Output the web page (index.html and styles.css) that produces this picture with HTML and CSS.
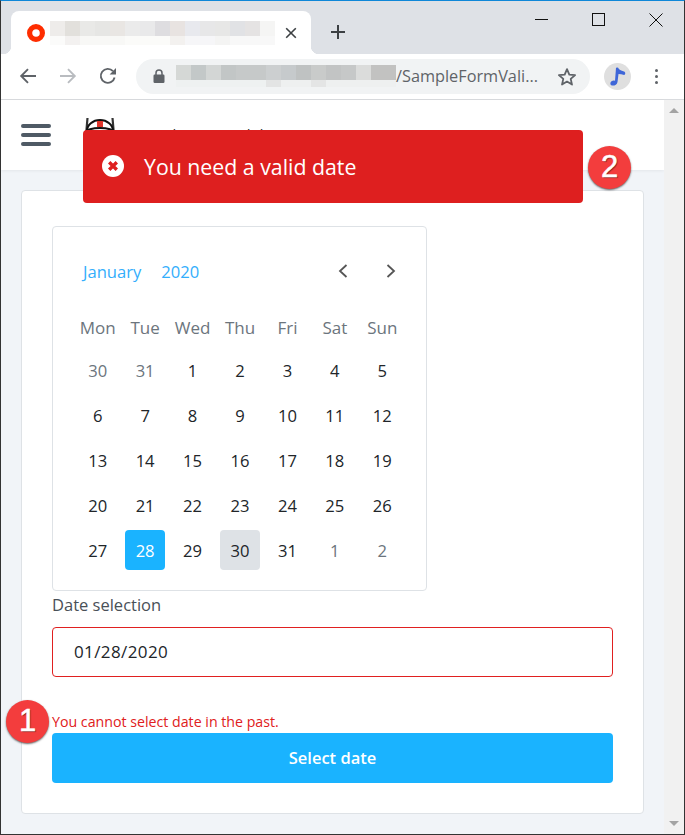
FILE: index.html
```html
<!DOCTYPE html>
<html>
<head>
    <title>Sample Form Validator</title>
    <link rel="stylesheet" href="styles.css">
</head>
<body>
    <div class="window">
        <div class="tabstrip">
            <div class="tab">
                <svg class="favicon" width="18" height="18" viewBox="0 0 18 18"><circle cx="9" cy="9" r="6.4" fill="none" stroke="#fe2d00" stroke-width="5.2"/></svg>
                <div class="tab-blur"><div class="tab-blur-a"></div><div class="tab-blur-b"></div></div>
                <svg class="tab-close" width="12" height="12" viewBox="0 0 12 12"><path d="M1.2 1.2l9.6 9.6M10.8 1.2l-9.6 9.6" stroke="#3c4043" stroke-width="1.6"/></svg>
            </div>
            <svg class="new-tab" width="16" height="16" viewBox="0 0 16 16"><path d="M8 1v14M1 8h14" stroke="#3c4043" stroke-width="2"/></svg>
            <div class="win-controls">
                <svg width="14" height="14" viewBox="0 0 14 14"><path d="M0 6.5h13" stroke="#111" stroke-width="1"/></svg>
                <svg width="14" height="14" viewBox="0 0 14 14"><rect x="0.5" y="0.5" width="12" height="12" fill="none" stroke="#111"/></svg>
                <svg width="14" height="14" viewBox="0 0 14 14"><path d="M0.5 0.5l13 13M13.5 0.5l-13 13" stroke="#111" stroke-width="1"/></svg>
            </div>
        </div>

        <div class="toolbar">
            <svg class="tool-back" width="18" height="18" viewBox="0 0 18 18"><path d="M17 9H2.5M9 2.2L2.2 9 9 15.8" fill="none" stroke="#5f6368" stroke-width="1.9"/></svg>
            <svg class="tool-forward" width="18" height="18" viewBox="0 0 18 18"><path d="M1 9h14.5M9 2.2L15.8 9 9 15.8" fill="none" stroke="#b9bcc0" stroke-width="1.9"/></svg>
            <svg class="tool-reload" width="18" height="18" viewBox="0 0 18 18"><path d="M15.6 10.5A7 7 0 1 1 14 4.2" fill="none" stroke="#5f6368" stroke-width="1.9"/><path d="M17 1v6.4h-6.4z" fill="#5f6368"/></svg>
            <div class="omnibox">
                <svg width="12" height="14" viewBox="0 0 12 14"><path d="M3 6V4a3 3 0 0 1 6 0v2" fill="none" stroke="#5f6368" stroke-width="1.5"/><rect x="0.5" y="5.5" width="11" height="8.5" rx="1.2" fill="#5f6368"/></svg>
                <div class="url-blur"><div class="url-blur-a"></div><div class="url-blur-b"></div></div>
                <span class="url-text">/SampleFormVali...</span>
                <svg class="star" width="20" height="19" viewBox="0 0 20 19"><path d="M10 2.2l2.3 5.4 5.8.5-4.4 3.8 1.3 5.7-5-3-5 3 1.3-5.7L1.9 8.1l5.8-.5z" fill="none" stroke="#5f6368" stroke-width="1.8" stroke-linejoin="round"/></svg>
            </div>
            <div class="avatar">
                <svg width="16" height="19" viewBox="0 0 16 19"><path d="M6 .8L8 .5c.9 2.2 2.9 3.3 6 3.9 1.6.5 1.7 3.1.1 3.7-1.9-.8-3.8-1.1-5.6-1.1L7.5 15c-.5 3-3.5 4-5.5 3.5C0 18-.2 15.5 1.5 14.3 3 13.3 4.5 13.5 5 14z" fill="#3e66d8"/></svg>
            </div>
            <div class="dots"><i></i><i></i><i></i></div>
        </div>

        <div class="viewport">
            <div class="page">
                <div class="navbar">
                    <div class="hamburger"><i></i><i></i><i></i></div>
                    <svg class="logo" width="34" height="36" viewBox="0 0 34 36"><path d="M1.5 24L3.5 1M30.500 24L28.500 1" stroke="#333" stroke-width="2.2" fill="none"/><path d="M3 14a13 11 0 0 1 26 0" fill="#fff" stroke="#111" stroke-width="2"/><rect x="13" y="4" width="6" height="6" fill="#e0362c"/><path d="M2 15a14 4 0 0 1 28 0" fill="none" stroke="#111" stroke-width="2"/></svg>
                    <span class="brand">Sample Form Validator</span>
                </div>
                <div class="content">
                    <div class="card">
                        <div class="calendar">
                            <div class="cal-head">
                                <span class="cal-month">January</span>
                                <span class="cal-year">2020</span>
                                <svg class="cal-prev" width="10" height="16" viewBox="0 0 10 16"><path d="M8.5 2L2 8l6.5 6" fill="none" stroke="#555" stroke-width="1.8"/></svg>
                                <svg class="cal-next" width="10" height="16" viewBox="0 0 10 16"><path d="M1.5 2L8 8l-6.5 6" fill="none" stroke="#555" stroke-width="1.8"/></svg>
                            </div>
                            <div class="cal-grid">
                                <span class="wd">Mon</span><span class="wd">Tue</span><span class="wd">Wed</span><span class="wd">Thu</span><span class="wd">Fri</span><span class="wd">Sat</span><span class="wd">Sun</span>
                                <span class="day muted">30</span><span class="day muted">31</span><span class="day">1</span><span class="day">2</span><span class="day">3</span><span class="day">4</span><span class="day">5</span>
                                <span class="day">6</span><span class="day">7</span><span class="day">8</span><span class="day">9</span><span class="day">10</span><span class="day">11</span><span class="day">12</span>
                                <span class="day">13</span><span class="day">14</span><span class="day">15</span><span class="day">16</span><span class="day">17</span><span class="day">18</span><span class="day">19</span>
                                <span class="day">20</span><span class="day">21</span><span class="day">22</span><span class="day">23</span><span class="day">24</span><span class="day">25</span><span class="day">26</span>
                                <span class="day">27</span><span class="day selected">28</span><span class="day">29</span><span class="day today">30</span><span class="day">31</span><span class="day muted">1</span><span class="day muted">2</span>
                            </div>
                        </div>
                        <label class="field-label">Date selection</label>
                        <div class="field-input">01/28/2020</div>
                        <div class="field-error">You cannot select date in the past.</div>
                        <button class="submit">Select date</button>
                    </div>
                </div>
            </div>
            <div class="scrollbar">
                <i class="arrow-up"></i>
                <i class="arrow-down"></i>
            </div>
        </div>

        <div class="toast">
            <svg width="22" height="22" viewBox="0 0 22 22"><circle cx="11" cy="11" r="11" fill="#fff"/><path d="M7.2 7.2l7.6 7.6M14.8 7.2l-7.6 7.6" stroke="#de1f1f" stroke-width="3.4"/></svg>
            <span class="toast-text">You need a valid date</span>
        </div>
        <div class="badge badge-one">1</div>
        <div class="badge badge-two">2</div>
    </div>
</body>
</html>
```

FILE: styles.css
```css
* {
    box-sizing: border-box;
}

body {
    margin: 0;
    font-family: "Open Sans", "Noto Sans", sans-serif;
    background-color: #fff;
}

.window {
    position: relative;
    width: 685px;
    height: 835px;
    display: flex;
    flex-direction: column;
    overflow: hidden;
    border-top: 1px solid #0f87d8;
    border-left: 1px solid #333;
    border-right: 1px solid #333;
    border-bottom: 1px solid #333;
}

/* browser chrome */
.tabstrip {
    height: 53px;
    flex: none;
    display: flex;
    align-items: flex-end;
    padding-left: 10px;
    background-color: #dee1e6;
}

.tab {
    position: relative;
    width: 300px;
    height: 43px;
    display: flex;
    align-items: center;
    padding: 0 13px 0 16px;
    background-color: #fff;
    border-radius: 8px 8px 0 0;
}

.tab::before,
.tab::after {
    content: "";
    position: absolute;
    bottom: 0;
    width: 8px;
    height: 8px;
}

.tab::before {
    left: -8px;
    background: radial-gradient(circle at 0 0, transparent 8px, #fff 8.5px);
}

.tab::after {
    right: -8px;
    background: radial-gradient(circle at 100% 0, transparent 8px, #fff 8.5px);
}

.favicon {
    flex: none;
}

.tab-blur {
    width: 225px;
    margin: 0 10px 0 5px;
}

.tab-blur-a {
    height: 15px;
    background: linear-gradient(90deg,
        #eeecea 0 15px, #e2e0dc 15px 30px, #e9e9e7 30px 45px, #e6e6e4 45px 60px, #e9e6e3 60px 75px,
        #ebebeb 75px 90px, #e9e9ea 90px 105px, #dedde0 105px 120px, #e8e3e1 120px 135px, #e8e9ee 135px 150px,
        #e7e7e8 150px 165px, #e7e7e6 165px 180px, #e1e2e5 180px 195px, #e5e3e3 195px 210px, #f5f5f4 210px 225px);
}

.tab-blur-b {
    height: 9px;
    background: linear-gradient(90deg,
        #fbfbfa 0 15px, #f3f1f0 15px 30px, #f8f8f6 30px 75px, #fbfbf9 75px 120px, #f3f1ef 120px 135px,
        #f6f6f8 135px 165px, #f4f4f3 165px 180px, #f8f8f8 180px 225px);
}

.tab-close {
    flex: none;
}

.new-tab {
    margin: 0 0 14px 19px;
}

.win-controls {
    margin-left: auto;
    align-self: flex-start;
    display: flex;
    gap: 43px;
    padding: 12px 21px 0 0;
}

.toolbar {
    height: 46px;
    flex: none;
    display: flex;
    align-items: center;
    padding: 0 0 1px 18px;
    background-color: #fff;
    border-bottom: 1px solid #d9dbde;
}

.tool-back,
.tool-forward,
.tool-reload {
    flex: none;
    margin-right: 22px;
}

.tool-reload {
    margin-right: 19px;
}

.omnibox {
    width: 454px;
    height: 35px;
    display: flex;
    align-items: center;
    padding-left: 17px;
    border-radius: 18px;
    background-color: #f1f3f4;
}

.url-blur {
    width: 220px;
    margin-left: 11px;
}

.url-blur-a {
    height: 15px;
    background: linear-gradient(90deg,
        #d5d8d6 0 15px, #c3c8c8 15px 30px, #d3d6d5 30px 45px, #c2c6c6 45px 60px, #c6c9c9 60px 90px,
        #cccfd0 90px 105px, #c6cacc 105px 120px, #bfc2c2 120px 135px, #c9cbca 135px 150px, #c2c4c4 150px 165px,
        #c6c8c8 165px 180px, #dbdcdb 180px 195px, #c2c2c1 195px 220px);
}

.url-blur-b {
    height: 7px;
    background: linear-gradient(90deg,
        #eef1f1 0 90px, #e3e4e4 90px 105px, #eef0f0 105px 135px, #e4e5e5 135px 150px, #eef0f0 150px 220px);
}

.url-text {
    width: 160px;
    font-size: 16.3px;
    color: #5f6368;
    white-space: nowrap;
}

.star {
    flex: none;
    margin-left: 1px;
}

.avatar {
    flex: none;
    width: 27px;
    height: 27px;
    margin-left: 14px;
    display: flex;
    align-items: center;
    justify-content: center;
    border-radius: 50%;
    background-color: #dfdfdf;
}

.dots {
    margin-left: 24px;
    display: flex;
    flex-direction: column;
    gap: 3px;
}

.dots i {
    display: block;
    width: 3px;
    height: 3px;
    border-radius: 50%;
    background-color: #5f6368;
}

/* page */
.viewport {
    flex: 1;
    min-height: 0;
    display: flex;
}

.page {
    width: 663px;
    display: flex;
    flex-direction: column;
    background-color: #f1f4f8;
}

.navbar {
    height: 70px;
    flex: none;
    display: flex;
    align-items: center;
    padding-left: 20px;
    background-color: #fff;
    box-shadow: 0 1px 3px rgba(0, 0, 0, 0.06);
}

.hamburger {
    width: 30px;
    display: flex;
    flex-direction: column;
    gap: 5px;
}

.hamburger i {
    display: block;
    height: 4px;
    border-radius: 2px;
    background-color: #4f5a65;
}

.logo {
    margin: 0 15px 0 33px;
    flex: none;
}

.brand {
    margin-bottom: 3px;
    font-size: 15px;
    color: #333;
    white-space: nowrap;
}

.content {
    flex: 1;
    padding: 20px;
}

.card {
    width: 623px;
    height: 624px;
    padding: 35px 30px 30px;
    background-color: #fff;
    border: 1px solid #dee2e6;
    border-radius: 4px;
}

.calendar {
    width: 375px;
    height: 365px;
    padding: 0 20px 0 21px;
    border: 1px solid #dee2e6;
    border-radius: 4px;
}

.cal-head {
    height: 78px;
    display: flex;
    align-items: center;
    padding: 10px 0 0 9px;
    font-size: 16.6px;
    color: #33aefc;
}

.cal-year {
    margin-left: 20px;
}

.cal-prev {
    margin-left: auto;
}

.cal-next {
    margin: 0 10px 0 38px;
}

.cal-grid {
    display: grid;
    grid-template-columns: repeat(7, 1fr);
    grid-auto-rows: 40px;
    row-gap: 5px;
    justify-items: center;
    align-items: center;
}

.wd {
    height: 40px;
    line-height: 40px;
    margin-top: 5px;
    font-size: 17px;
    color: #6c757d;
}

.day {
    width: 40px;
    height: 40px;
    line-height: 42px;
    text-align: center;
    font-size: 16.6px;
    color: #212529;
    border-radius: 4px;
}

.day.muted {
    color: #6c757d;
}

.day.selected {
    color: #fff;
    background-color: #1ab3ff;
}

.day.today {
    background-color: #dee2e6;
}

.field-label {
    display: block;
    margin-top: 2px;
    height: 34px;
    line-height: 24px;
    font-size: 16.5px;
    color: #495057;
}

.field-input {
    width: 561px;
    height: 50px;
    line-height: 48px;
    padding-left: 21px;
    font-size: 17px;
    letter-spacing: 0.4px;
    color: #212529;
    border: 1px solid #e02020;
    border-radius: 4px;
}

.field-error {
    margin-top: 35px;
    height: 21px;
    line-height: 20px;
    font-size: 14.2px;
    color: #e02020;
}

.submit {
    display: block;
    width: 561px;
    height: 50px;
    padding: 0 0 2px;
    font-family: inherit;
    font-size: 16.5px;
    font-weight: 600;
    color: #fff;
    background-color: #1ab3ff;
    border: none;
    border-radius: 4px;
}

.scrollbar {
    width: 20px;
    display: flex;
    flex-direction: column;
    align-items: center;
    justify-content: space-between;
    padding: 8px 0;
    background-color: #f1f1f1;
}

.arrow-up,
.arrow-down {
    width: 0;
    height: 0;
    border-left: 5px solid transparent;
    border-right: 5px solid transparent;
}

.arrow-up {
    border-bottom: 5px solid #a3a3a3;
}

.arrow-down {
    border-top: 5px solid #a3a3a3;
}

/* overlays */
.toast {
    position: absolute;
    left: 82px;
    top: 129px;
    width: 500px;
    height: 73px;
    display: flex;
    align-items: center;
    gap: 20px;
    padding: 0 0 2px 19px;
    font-size: 21.3px;
    color: #fff;
    background-color: #de1f1f;
    border-radius: 4px;
}

.toast-text {
    padding-top: 2px;
}

.badge {
    position: absolute;
    width: 43px;
    height: 43px;
    line-height: 42px;
    text-align: center;
    font-family: "Liberation Sans", sans-serif;
    font-size: 31px;
    -webkit-text-stroke: 0.5px #fff;
    color: #fff;
    background-color: #f33d3d;
    border-radius: 50%;
    box-shadow: 0 1px 2px rgba(0, 0, 0, 0.6);
    text-shadow: 1px 1px 1px rgba(0, 0, 0, 0.45);
}

.badge-one {
    left: 5px;
    top: 699px;
}

.badge-two {
    left: 587px;
    top: 145px;
}
```
